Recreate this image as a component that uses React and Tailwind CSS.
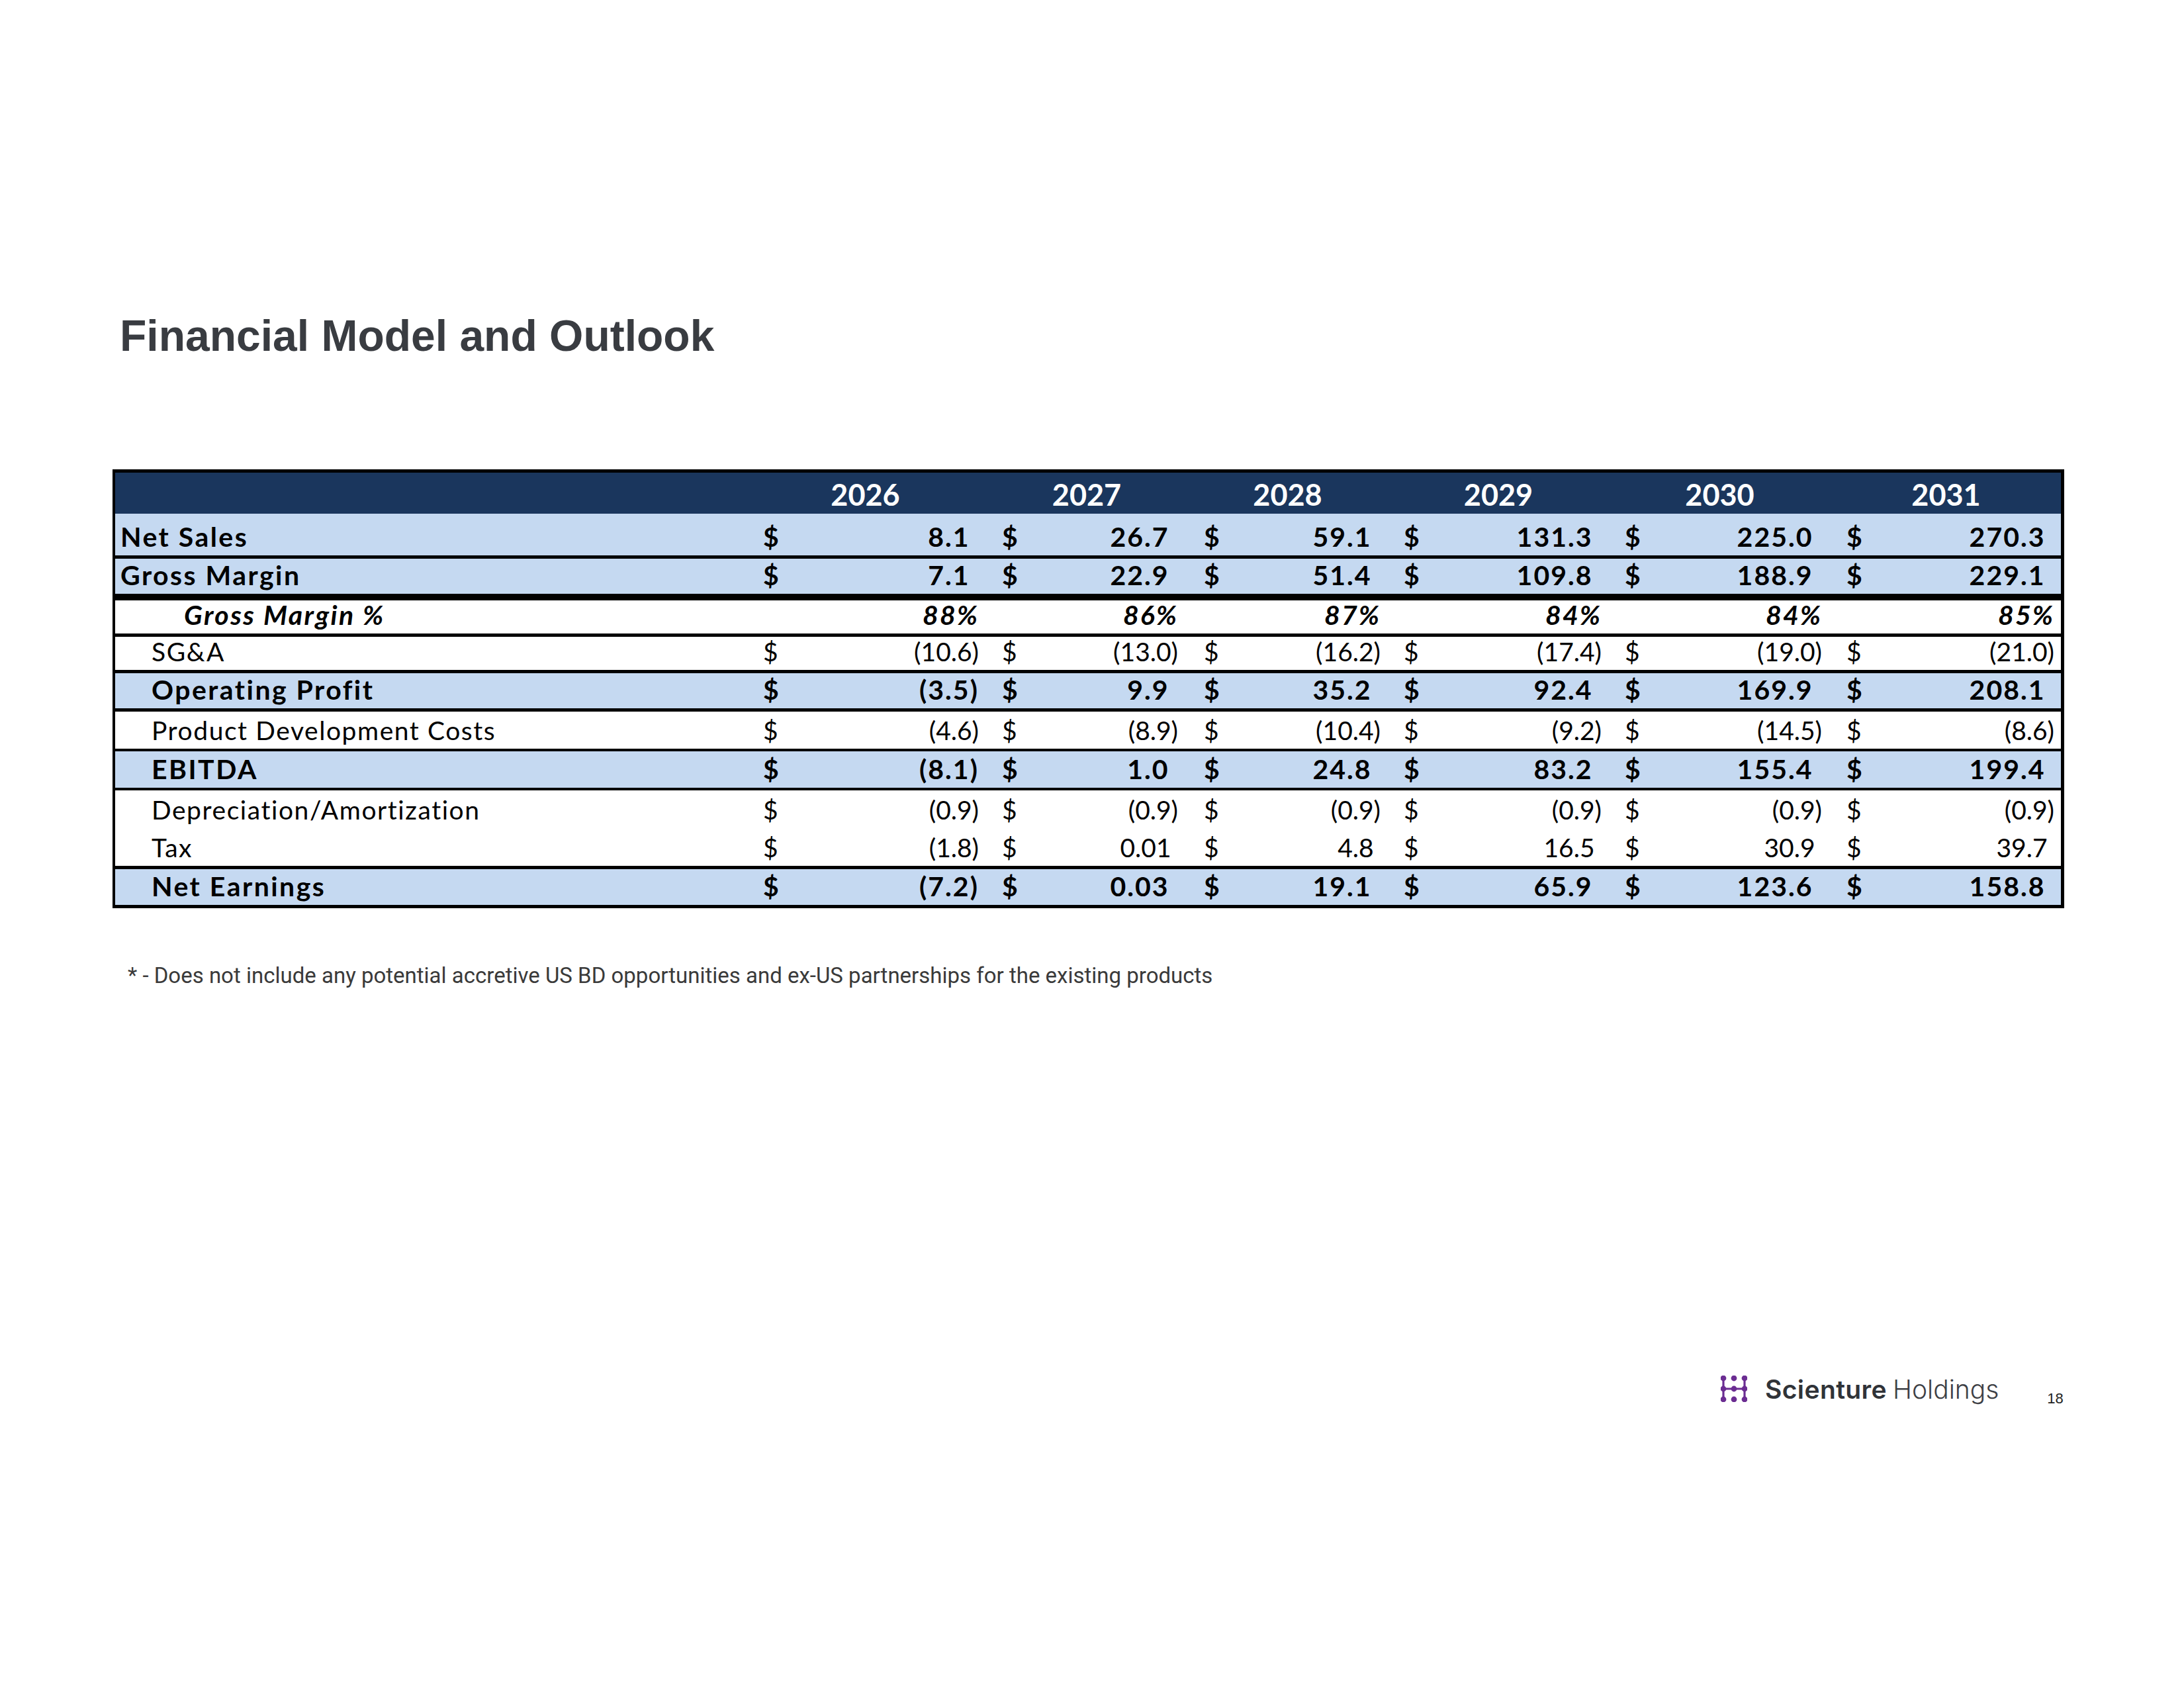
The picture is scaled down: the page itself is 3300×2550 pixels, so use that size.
import React from "react";

const ROWS = [
  { label: "Net Sales", bold: true, indent: "pl-[8px]", bg: "bg-[#c5d9f1]", h: "h-[68px] border-b-[5px]", vals: ["8.1", "26.7", "59.1", "131.3", "225.0", "270.3"], dollar: true },
  { label: "Gross Margin", bold: true, indent: "pl-[8px]", bg: "bg-[#c5d9f1]", h: "h-[63px] border-b-[10px]", vals: ["7.1", "22.9", "51.4", "109.8", "188.9", "229.1"], dollar: true },
  { label: "Gross Margin %", bold: true, italic: true, indent: "pl-[104px]", bg: "bg-white", h: "h-[55px] border-b-[5px]", vals: ["88%", "86%", "87%", "84%", "84%", "85%"], dollar: false },
  { label: "SG&A", indent: "pl-[55px]", bg: "bg-white", h: "h-[55px] border-b-[5px]", vals: ["(10.6)", "(13.0)", "(16.2)", "(17.4)", "(19.0)", "(21.0)"], dollar: true },
  { label: "Operating Profit", bold: true, indent: "pl-[55px]", bg: "bg-[#c5d9f1]", h: "h-[58px] border-b-[5px]", vals: ["(3.5)", "9.9", "35.2", "92.4", "169.9", "208.1"], dollar: true },
  { label: "Product Development Costs", indent: "pl-[55px]", bg: "bg-white", h: "h-[60px] border-b-[4px]", vals: ["(4.6)", "(8.9)", "(10.4)", "(9.2)", "(14.5)", "(8.6)"], dollar: true },
  { label: "EBITDA", bold: true, indent: "pl-[55px]", bg: "bg-[#c5d9f1]", h: "h-[59px] border-b-[4px]", vals: ["(8.1)", "1.0", "24.8", "83.2", "155.4", "199.4"], dollar: true },
  { label: "Depreciation/Amortization", indent: "pl-[55px]", bg: "bg-white", h: "h-[57px]", vals: ["(0.9)", "(0.9)", "(0.9)", "(0.9)", "(0.9)", "(0.9)"], dollar: true },
  { label: "Tax", indent: "pl-[55px]", bg: "bg-white", h: "h-[62px] border-b-[5px]", vals: ["(1.8)", "0.01", "4.8", "16.5", "30.9", "39.7"], dollar: true },
  { label: "Net Earnings", bold: true, indent: "pl-[55px]", bg: "bg-[#c5d9f1]", h: "h-[54px]", vals: ["(7.2)", "0.03", "19.1", "65.9", "123.6", "158.8"], dollar: true },
];

const PR = ["pr-[35px]", "pr-[39px]", "pr-[35px]", "pr-[35px]", "pr-[37px]", "pr-[10px]"];
const HPR = ["pr-[52px]", "pr-[49px]", "pr-[49px]", "pr-[48px]", "pr-[48px]", "pr-[23px]"];
const YEARS = ["2026", "2027", "2028", "2029", "2030", "2031"];
const GRID = "grid grid-cols-[979px_361px_305px_302px_334px_335px_324px]";

function Value({ v, pct }) {
  const neg = v.startsWith("(");
  if (pct) return <span>{v}</span>;
  return (
    <span>
      {v}
      {!neg && <span className="invisible">)</span>}
    </span>
  );
}

function Row({ r }) {
  const style = r.italic ? "italic" : "";
  const labelCls = r.bold ? "font-bold text-[41px] tracking-[0.06em]" : "font-normal tracking-[0.04em]";
  const valCls = r.bold ? "font-bold text-[41px] tracking-[0.05em]" : "font-normal tracking-normal";
  return (
    <div className={`${GRID} ${r.h} ${r.bg} border-black`}>
      <div className={`flex items-end pb-[8px] leading-none ${r.indent} ${labelCls} ${style}`}>{r.label}</div>
      {r.vals.map((v, i) => (
        <div key={i} className={`flex items-end justify-between pb-[8px] leading-none ${PR[i]} ${valCls} ${style}`}>
          <span>{r.dollar ? "$" : ""}</span>
          <Value v={v} pct={!r.dollar} />
        </div>
      ))}
    </div>
  );
}

function Logo() {
  const dots = [
    [4, 4], [4, 20], [4, 36],
    [20, 4], [20, 20], [20, 36],
    [36, 4], [36, 20], [36, 36],
  ];
  return (
    <svg width="40" height="40" viewBox="0 0 40 40">
      <g stroke="#6b2d92" strokeWidth="3.2" strokeLinecap="round">
        <line x1="4" y1="4" x2="4" y2="36" />
        <line x1="36" y1="4" x2="36" y2="36" />
        <line x1="4" y1="20" x2="36" y2="20" />
      </g>
      {dots.map(([x, y], i) => (
        <circle key={i} cx={x} cy={y} r="4.4" fill="#6b2d92" />
      ))}
    </svg>
  );
}

export default function App() {
  return (
    <div className="w-[3300px] h-[2550px] bg-white flex flex-col overflow-hidden">
      <h1
        className="mt-[474px] ml-[181px] text-[66px] leading-none font-bold text-[#393c41]"
        style={{ fontFamily: '"Liberation Sans", Arial, sans-serif' }}
      >
        Financial Model and Outlook
      </h1>

      <div
        className="mt-[169px] ml-[170px] w-[2949px] border-[5px] border-l-[4px] border-black text-black text-[39px]"
        style={{ fontFamily: 'Lato, "Open Sans", sans-serif' }}
      >
        <div className={`${GRID} h-[62px] bg-[#1a365d] text-white font-bold text-[45px] tracking-normal`}>
          <div />
          {YEARS.map((y, i) => (
            <div key={y} className={`flex items-end justify-center pb-[6px] leading-none ${HPR[i]}`}>
              {y}
            </div>
          ))}
        </div>
        {ROWS.map((r) => (
          <Row key={r.label} r={r} />
        ))}
      </div>

      <p
        className="mt-[85px] ml-[193px] text-[33px] leading-none text-[#3a3a3a]"
        style={{ fontFamily: 'Roboto, "Liberation Sans", sans-serif' }}
      >
        * - Does not include any potential accretive US BD opportunities and ex-US partnerships for the existing products
      </p>

      <div className="mt-[582px] ml-[2600px] flex items-center" style={{ fontFamily: 'Inter, "Liberation Sans", sans-serif' }}>
        <Logo />
        <span className="ml-[27px] text-[39px] leading-none font-semibold text-[#303338] tracking-[0.01em]">Scienture</span>
        <span className="ml-[9px] text-[39px] leading-none font-light text-[#3d4045]">Holdings</span>
        <span
          className="ml-[73px] mt-[30px] text-[22px] leading-none text-[#222]"
          style={{ fontFamily: '"Liberation Sans", Arial, sans-serif' }}
        >
          18
        </span>
      </div>
    </div>
  );
}
